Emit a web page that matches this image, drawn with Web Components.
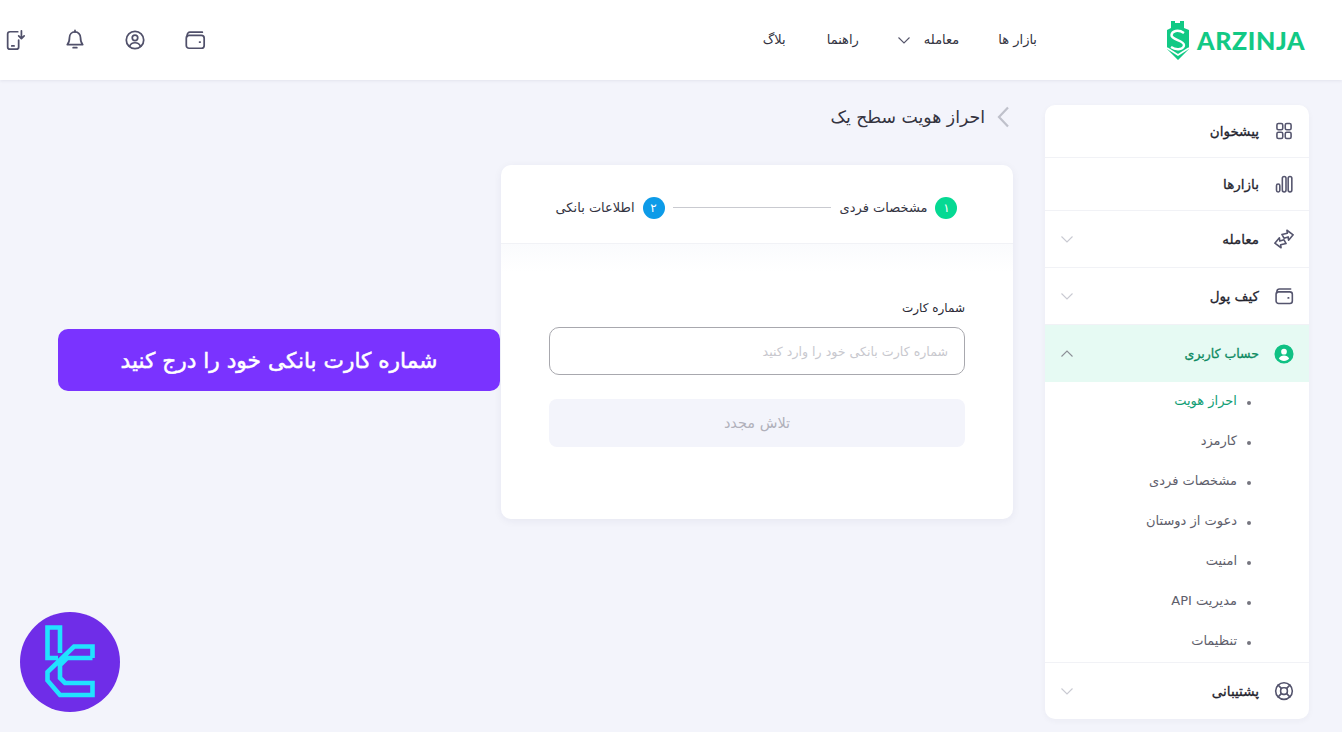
<!DOCTYPE html>
<html lang="fa" dir="rtl">
<head>
<meta charset="utf-8">
<title>Arzinja</title>
<style>
    html, body { margin: 0; height: 100%; }
    body {
        background: #f3f4fb;
        font-family: "DejaVu Sans", "Noto Sans", sans-serif;
        color: #2e2e3a;
        overflow: hidden;
    }
</style>
</head>
<body>
<app-header></app-header>
<page-body>
    <side-nav slot="side">
        <nav-item icon="grid" label="پیشخوان"></nav-item>
        <nav-item icon="bars" label="بازارها"></nav-item>
        <nav-item icon="swap" label="معامله" chevron="down" tall></nav-item>
        <nav-item icon="wallet" label="کیف پول" chevron="down" tall></nav-item>
        <nav-item icon="userFilled" label="حساب کاربری" chevron="up" tall active></nav-item>
        <sub-item current>احراز هویت</sub-item>
        <sub-item>کارمزد</sub-item>
        <sub-item>مشخصات فردی</sub-item>
        <sub-item>دعوت از دوستان</sub-item>
        <sub-item>امنیت</sub-item>
        <sub-item>مدیریت API</sub-item>
        <sub-item>تنظیمات</sub-item>
        <nav-item icon="lifebuoy" label="پشتیبانی" chevron="down" tall divided></nav-item>
    </side-nav>
    <page-title>احراز هویت سطح یک</page-title>
    <form-card></form-card>
</page-body>
<promo-banner>شماره کارت بانکی خود را درج کنید</promo-banner>
<brand-badge></brand-badge>

<script>
const ICONS = {
    grid: '<rect x="3.500" y="3" width="7" height="7.500" rx="1.800"/><rect x="13.500" y="3" width="7" height="7.500" rx="1.800"/><rect x="3.500" y="13.500" width="7" height="7.500" rx="1.800"/><rect x="13.500" y="13.500" width="7" height="7.500" rx="1.800"/>',
    bars: '<rect x="3" y="12" width="4" height="9.500" rx="2"/><rect x="10" y="3" width="4.400" height="18.500" rx="2.200"/><rect x="17" y="3" width="4.400" height="18.500" rx="2.200"/>',
    swap: '<path d="M12 11L9.500 6.500 16 5l-.5-3.500L23 7l-5.500 6.500-.5-4z"/><path d="M12 13l2.500 4.500L8 19l.5 3.500L1 17l5.500-6.500.5 4z"/>',
    wallet: '<path d="M3.500 8V6.500C3.500 4.800 4.800 3.500 6.500 3.500H20"/><rect x="2.500" y="7" width="19.500" height="14" rx="3"/><path d="M17 14.300h.6" stroke-width="2"/>',
    user: '<circle cx="12" cy="12" r="9.500"/><circle cx="12" cy="9.600" r="3"/><path d="M6 19c1-2.700 3.300-4 6-4s5 1.300 6 4"/>',
    userFilled: '<circle cx="12" cy="12" r="10.500" fill="currentColor"/><circle cx="12" cy="9.200" r="3.400" fill="#fff" stroke="none"/><path d="M5.800 17.400c1.200-2.500 3.500-3.600 6.200-3.600s5 1.100 6.200 3.600c-1.400 1.800-3.700 2.900-6.200 2.900s-4.800-1.100-6.200-2.900z" fill="#fff" stroke="none"/>',
    lifebuoy: '<circle cx="12" cy="12" r="10"/><rect x="8" y="8" width="8" height="8" rx="3"/><path d="M5 5l3.800 3.800M19 5l-3.800 3.800M5 19l3.800-3.800M19 19l-3.800-3.800"/>',
    bell: '<path d="M12 3.200c-3.600 0-6 2.800-6 6.200 0 4.400-1 6.200-2.400 7.600h16.800C19 15.600 18 13.800 18 9.400c0-3.400-2.400-6.200-6-6.200z"/><path d="M12 1.600v1.600M10 20.400h4"/>',
    phone: '<path d="M15 3H6.500A2.500 2.500 0 0 0 4 5.500v14A2.500 2.500 0 0 0 6.500 22h7a2.500 2.500 0 0 0 2.500-2.500V12"/><path d="M8.500 18.500h2.500M19 2v8M16 7.500l3 3 3-3"/>'
};

function icon(name, size) {
    return `<svg width="${size}" height="${size}" viewBox="0 0 24 24" fill="none" stroke="currentColor" stroke-width="1.900" stroke-linecap="round" stroke-linejoin="round">${ICONS[name]}</svg>`;
}

class AppHeader extends HTMLElement {
    constructor() {
        super();
        this.attachShadow({ mode: 'open' });
        this.shadowRoot.innerHTML = `
            <style>
                :host {
                    display: flex;
                    align-items: center;
                    height: 80px;
                    background: #fff;
                    box-shadow: 0 1px 3px rgba(40,40,80,0.08);
                    padding-right: 35px;
                    padding-left: 4px;
                    position: relative;
                }
                .logo { display: flex; align-items: center; gap: 7px; width: 141px; direction: ltr; }
                .logo b {
                    font: 900 25px "Lato", sans-serif;
                    color: #12c985;
                    letter-spacing: 0.6px;
                }
                nav { display: flex; align-items: center; margin-right: 129px; font-size: 13px; color: #33333f; padding-bottom: 1px; }
                nav span { display: block; }
                .chev { color: #55556a; margin-right: 13px; display: flex; }
                .icons { display: flex; margin-right: auto; gap: 38px; color: #50506a; flex-direction: row-reverse; }
                .icons svg { display: block; }
            </style>
            <div class="logo">
                <svg width="24" height="40" viewBox="0 0 24 40">
                    <path fill="#12c985" d="M1 10l4-2V1h4v2h5V1h4v7l5 2v19L12 40 1 29z"/>
                    <path fill="none" stroke="#fff" stroke-width="2.400" d="M18 13C12 9 6 11 5.500 15 5 20 18 20 18 25c0 4-7 6-13 2"/>
                    <path fill="none" stroke="#fff" stroke-width="1.600" d="M1 28l11 7 11-7"/>
                </svg>
                <b>ARZINJA</b>
            </div>
            <nav>
                <span>بازار ها</span>
                <span style="margin-right:39px">معامله</span>
                <span class="chev"><svg width="14" height="14" viewBox="0 0 14 14" fill="none" stroke="currentColor" stroke-width="1.100"><path d="M1.500 4.500L7 10l5.500-5.500"/></svg></span>
                <span style="margin-right:38px">راهنما</span>
                <span style="margin-right:41px">بلاگ</span>
            </nav>
            <div class="icons">
                ${icon('phone', 22)}${icon('bell', 22)}${icon('user', 22)}${icon('wallet', 22)}
            </div>
        `;
    }
}

class PageBody extends HTMLElement {
    constructor() {
        super();
        this.attachShadow({ mode: 'open' });
        this.shadowRoot.innerHTML = `
            <style>
                :host {
                    display: flex;
                    align-items: flex-start;
                    gap: 32px;
                    padding: 25px 33px 0 0;
                }
                main { width: 512px; display: flex; flex-direction: column; }
            </style>
            <slot name="side"></slot>
            <main><slot></slot></main>
        `;
    }
}

class SideNav extends HTMLElement {
    constructor() {
        super();
        this.attachShadow({ mode: 'open' });
        this.shadowRoot.innerHTML = `
            <style>
                :host {
                    display: block;
                    width: 264px;
                    background: #fff;
                    border-radius: 10px;
                    overflow: hidden;
                    box-shadow: 0 2px 6px rgba(40,40,80,0.04);
                }
            </style>
            <slot></slot>
        `;
    }
}

class NavItem extends HTMLElement {
    connectedCallback() {
        if (this.shadowRoot) return;
        this.attachShadow({ mode: 'open' });
        const chevron = this.getAttribute('chevron');
        const arrow = chevron === 'up' ? 'M1.500 9.500L7 4l5.500 5.500' : 'M1.500 4.500L7 10l5.500-5.500';
        this.shadowRoot.innerHTML = `
            <style>
                :host {
                    display: flex;
                    align-items: center;
                    height: 52px;
                    padding: 0 15px 0 0;
                    gap: 15px;
                    font-size: 13.500px;
                    -webkit-text-stroke: 0.3px currentColor;
                    color: #24242e;
                    border-bottom: 1px solid #f1f2f6;
                }
                :host([tall]) { height: 56px; }
                :host([active]) { background: #e6faf3; color: #0d8a62; border-bottom: 0; height: 57px; font-size: 12.500px; }
                :host([divided]) { border-top: 1px solid #f1f2f6; border-bottom: 0; }
                .ic { color: #55556e; display: flex; -webkit-text-stroke: 0; }
                :host([active]) .ic { color: #10c184; }
                .ch { margin-right: auto; margin-left: 15px; color: #c9cad2; display: flex; }
                :host([active]) .ch { color: #8c8f96; }
                .lb { margin-top: -1px; }
            </style>
            <span class="ic">${icon(this.getAttribute('icon'), 20)}</span>
            <span class="lb">${this.getAttribute('label')}</span>
            ${chevron ? `<span class="ch"><svg width="14" height="14" viewBox="0 0 14 14" fill="none" stroke="currentColor" stroke-width="1.100"><path d="${arrow}"/></svg></span>` : ''}
        `;
    }
}

class SubItem extends HTMLElement {
    constructor() {
        super();
        this.attachShadow({ mode: 'open' });
        this.shadowRoot.innerHTML = `
            <style>
                :host {
                    display: flex;
                    align-items: center;
                    height: 40px;
                    padding-right: 58px;
                    gap: 10px;
                    font-size: 13px;
                    color: #5e5e6b;
                }
                :host([current]) { color: #0f9d74; }
                i { width: 4px; height: 4px; border-radius: 50%; background: #75757f; margin-top: 2px; }
                span { margin-top: -3px; }
            </style>
            <i></i><span><slot></slot></span>
        `;
    }
}

class PageTitle extends HTMLElement {
    constructor() {
        super();
        this.attachShadow({ mode: 'open' });
        this.shadowRoot.innerHTML = `
            <style>
                :host {
                    display: flex;
                    align-items: center;
                    height: 24px;
                    gap: 12px;
                    padding-right: 3px;
                    margin-bottom: 36px;
                    font-size: 17.300px;
                    color: #33333f;
                }
                svg { display: block; }
            </style>
            <svg width="13" height="22" viewBox="0 0 13 22" fill="none" stroke="#bfc1cb" stroke-width="2.200"><path d="M11 1.500L2 11l9 9.500"/></svg>
            <span><slot></slot></span>
        `;
    }
}

class StepMark extends HTMLElement {
    connectedCallback() {
        if (this.shadowRoot) return;
        this.attachShadow({ mode: 'open' });
        this.shadowRoot.innerHTML = `
            <style>
                :host { display: flex; align-items: center; gap: 8px; font-size: 13px; color: #33333f; }
                b {
                    width: 22px; height: 22px; border-radius: 50%;
                    background: ${this.getAttribute('color')};
                    color: #fff; font-weight: 400; font-size: 12px;
                    display: flex; align-items: center; justify-content: center;
                }
            </style>
            <b>${this.getAttribute('num')}</b><span><slot></slot></span>
        `;
    }
}
customElements.define('step-mark', StepMark);

class FormCard extends HTMLElement {
    constructor() {
        super();
        this.attachShadow({ mode: 'open' });
        this.shadowRoot.innerHTML = `
            <style>
                :host {
                    display: block;
                    height: 354px;
                    background: #fff;
                    border-radius: 10px;
                    box-shadow: 0 2px 8px rgba(40,40,80,0.06);
                    overflow: hidden;
                }
                .steps {
                    box-sizing: border-box;
                    display: flex;
                    align-items: center;
                    justify-content: center;
                    height: 79px;
                    padding: 7px 1px 0 0;
                    gap: 8px;
                    border-bottom: 1px solid #f1f2f6;
                }
                .steps hr { width: 158px; height: 1px; border: 0; margin: 0 1px 0 0; background: #c9cad0; }
                .fade { height: 28px; background: linear-gradient(#fafbfd, #fff); }
                .form { padding: 27px 48px 0; }
                label { display: block; font-size: 12px; color: #2a2a35; margin-bottom: 10px; line-height: 18px; }
                .input {
                    box-sizing: border-box;
                    height: 48px;
                    border: 1px solid #a8a8ae;
                    border-radius: 10px;
                    display: flex;
                    align-items: center;
                    padding: 0 16px;
                    font-size: 12.600px;
                    color: #c8c8ce;
                }
                .btn {
                    height: 48px;
                    margin-top: 24px;
                    border-radius: 8px;
                    background: #f3f4fb;
                    color: #b0b0ba;
                    font-size: 14.500px;
                    display: flex;
                    align-items: center;
                    justify-content: center;
                }
            </style>
            <div class="steps">
                <step-mark num="۱" color="#05d993">مشخصات فردی</step-mark>
                <hr>
                <step-mark num="۲" color="#0d9be8">اطلاعات بانکی</step-mark>
            </div>
            <div class="fade"></div>
            <div class="form">
                <label>شماره کارت</label>
                <div class="input">شماره کارت بانکی خود را وارد کنید</div>
                <div class="btn">تلاش مجدد</div>
            </div>
        `;
    }
}

class PromoBanner extends HTMLElement {
    constructor() {
        super();
        this.attachShadow({ mode: 'open' });
        this.shadowRoot.innerHTML = `
            <style>
                :host {
                    position: absolute;
                    left: 58px;
                    top: 329px;
                    width: 442px;
                    height: 62px;
                    box-sizing: border-box;
                    border-radius: 10px;
                    background: #7a33ff;
                    color: #fff;
                    font-size: 21.700px;
                    -webkit-text-stroke: 0.5px #fff;
                    display: flex;
                    align-items: center;
                    justify-content: center;
                }
            </style>
            <slot></slot>
        `;
    }
}

class BrandBadge extends HTMLElement {
    constructor() {
        super();
        this.attachShadow({ mode: 'open' });
        this.shadowRoot.innerHTML = `
            <style>
                :host { position: absolute; left: 20px; top: 612px; width: 100px; height: 100px; display: block; }
                svg { display: block; }
            </style>
            <svg width="100" height="100" viewBox="0 0 100 100">
                <circle cx="50" cy="50" r="50" fill="#6f2de8"/>
                <g fill="none" stroke="#21e2ff" stroke-width="4.600" stroke-linejoin="miter">
                    <path d="M40 41V15.500H27.500V46H38M72.500 46V34.500H54L27.500 60V68.500L40 83H72.500V71H45L40 66V53L47 46H72.500"/>
                </g>
            </svg>
        `;
    }
}

customElements.define('app-header', AppHeader);
customElements.define('page-body', PageBody);
customElements.define('side-nav', SideNav);
customElements.define('nav-item', NavItem);
customElements.define('sub-item', SubItem);
customElements.define('page-title', PageTitle);
customElements.define('form-card', FormCard);
customElements.define('promo-banner', PromoBanner);
customElements.define('brand-badge', BrandBadge);
</script>
</body>
</html>
